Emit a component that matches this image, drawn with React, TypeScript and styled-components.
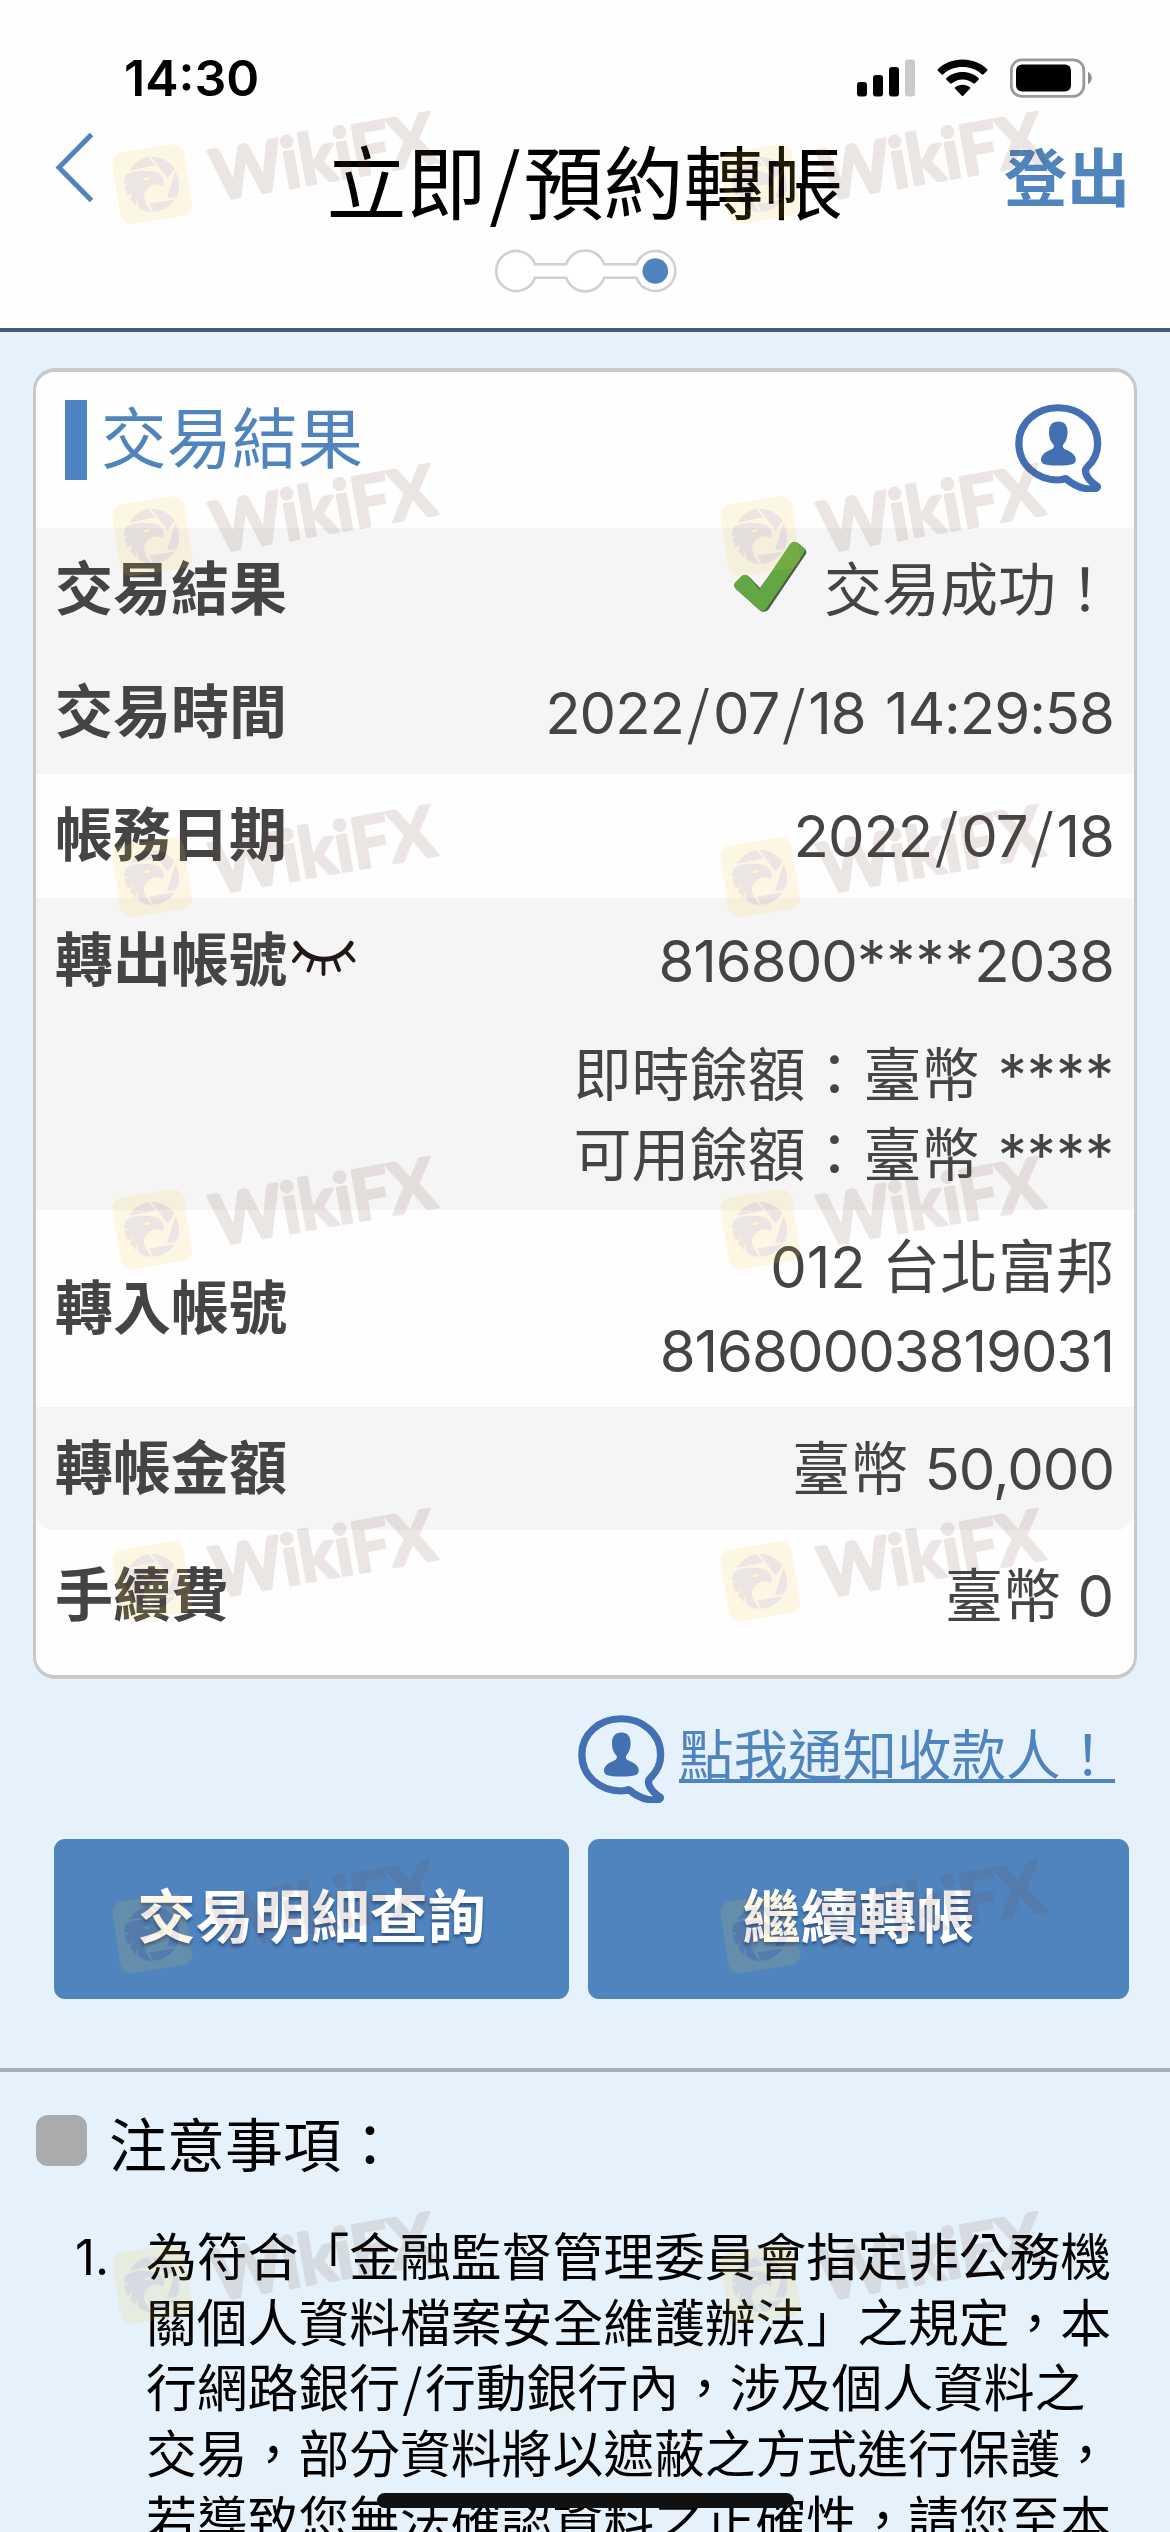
import React from 'react';
import styled, { createGlobalStyle } from 'styled-components';

const GlobalStyle = createGlobalStyle`
  body { margin: 0; background: #e5f2fc; }
  * { box-sizing: border-box; }
`;

const blue = '#4f84be';
const fonts = `Inter, "Noto Sans CJK TC", sans-serif`;

const Page = styled.div`
  position: relative;
  width: 1170px;
  height: 2532px;
  overflow: hidden;
  background: #e5f2fc;
  font-family: ${fonts};
  color: #000;
`;

const Header = styled.header`
  height: 332px;
  background: #fefefe;
  border-bottom: 4px solid #445c78;
`;

const StatusBar = styled.div`
  display: flex;
  align-items: center;
  justify-content: space-between;
  height: 120px;
  padding: 36px 78px 0 124px;
`;

const Time = styled.span`
  font-size: 50px;
  font-weight: 600;
  line-height: 60px;
`;

const StatusIcons = styled.div`
  display: flex;
  align-items: center;
  gap: 22px;
`;

const NavBar = styled.div`
  display: grid;
  grid-template-columns: 200px 1fr 200px;
  align-items: center;
  height: 128px;
  padding: 0 40px 0 54px;
`;

const BackButton = styled.a`
  display: flex;
  padding-bottom: 32px;
`;

const Title = styled.h1`
  margin: 0 0 0 -14px;
  font-size: 80px;
  font-weight: 400;
  line-height: 128px;
  text-align: center;
  white-space: nowrap;
`;

const Slash = styled.span<{ $width: number }>`
  display: inline-block;
  width: ${p => p.$width}px;
  font-family: "Noto Sans CJK TC", sans-serif;
  letter-spacing: 0;
  line-height: 1;
  text-align: center;
`;

const Logout = styled.a`
  color: ${blue};
  font-size: 63px;
  font-weight: 700;
  line-height: 96px;
  padding-bottom: 12px;
  text-align: right;
`;

const Steps = styled.div`
  display: flex;
  justify-content: center;
  padding: 1px 0 0 1px;
`;

const Card = styled.section`
  margin: 36px 33px 0;
  height: 1311px;
  border: 4px solid #c9c9c9;
  border-left-width: 3px;
  border-right-width: 3px;
  border-radius: 22px;
  background: #fefefe;
  overflow: hidden;
`;

const CardHead = styled.div`
  display: flex;
  justify-content: space-between;
  align-items: flex-start;
  height: 156px;
  padding: 28px 31px 0 29px;
`;

const Heading = styled.h2`
  display: flex;
  align-items: center;
  margin: 0;
  height: 80px;
  padding: 0 0 0 14px;
  border-left: 22px solid #4f84c4;
  color: ${blue};
  font-size: 65.5px;
  font-weight: 400;
  line-height: 70px;
`;

const NotifyButton = styled.a`
  display: flex;
  margin-top: 4px;
`;

const Row = styled.div<{ $shade?: boolean; $round?: boolean; $height?: number; $top?: number }>`
  display: flex;
  flex-wrap: wrap;
  justify-content: space-between;
  align-items: center;
  min-height: ${p => p.$height ?? 123}px;
  padding: ${p => p.$top ?? 0}px 20px 0 19px;
  background: ${p => (p.$shade ? '#f5f5f5' : 'transparent')};
  border-radius: ${p => (p.$round ? '0 0 18px 18px' : '0')};
`;

const Label = styled.div`
  display: flex;
  align-items: center;
  padding-bottom: 2px;
  color: #444;
  font-size: 58px;
  font-weight: 700;
  line-height: 120px;
`;

const Value = styled.div`
  display: flex;
  align-items: center;
  color: #444;
  font-size: 58px;
  font-weight: 400;
  line-height: 84px;
  text-align: right;
`;

const Digits = styled.span`
  letter-spacing: -1px;
  word-spacing: 4px;
  white-space: pre;
`;

const Mask = styled.span`
  letter-spacing: 0.3px;
`;

const Balances = styled.div`
  width: 100%;
  padding: 13px 0 15px;
  color: #444;
  font-size: 58px;
  line-height: 80px;
  word-spacing: 2px;
  text-align: right;
`;

const EyeSlot = styled.span`
  display: flex;
  margin: -4px 0 0 5px;
`;

const CheckSlot = styled.span`
  display: flex;
  margin: -26px 16px 0 0;
`;

const NotifyRow = styled.div`
  display: flex;
  justify-content: flex-end;
  align-items: center;
  height: 88px;
  margin-top: 36px;
  padding-right: 55px;
  gap: 13px;
`;

const NotifyLink = styled.a`
  color: ${blue};
  font-size: 54.5px;
  line-height: 80px;
  padding-bottom: 9px;
  text-decoration: underline;
  text-decoration-thickness: 4px;
  text-underline-offset: 4px;
  text-decoration-skip-ink: none;
`;

const Actions = styled.div`
  display: grid;
  grid-template-columns: 515px 541px;
  gap: 19px;
  margin-top: 36px;
  padding-left: 54px;
`;

const ActionButton = styled.button`
  height: 160px;
  padding: 0 0 12px;
  border: 0;
  border-radius: 11px;
  background: ${blue};
  color: #fff;
  font-family: ${fonts};
  font-size: 58px;
  font-weight: 600;
  text-shadow: 0 3px 3px rgba(20, 50, 100, 0.55);
`;

const Notes = styled.section`
  margin-top: 69px;
  border-top: 4px solid #abafb2;
  padding: 44px 0 0 36px;
`;

const NotesTitle = styled.h3`
  display: flex;
  align-items: center;
  gap: 22px;
  margin: 0;
  font-size: 58px;
  font-weight: 400;
  line-height: 60px;
`;

const NotesMark = styled.span`
  width: 51px;
  height: 51px;
  margin-top: -11px;
  border-radius: 12px;
  background: #aaabad;
`;

const NoteItem = styled.div`
  display: grid;
  grid-template-columns: 71px auto;
  margin-top: 49px;
  padding-left: 39px;
  font-size: 50.8px;
  line-height: 65.7px;
`;

const NoteNumber = styled.span`
  font-size: 49px;
`;

const NoteLine = styled.div`
  height: 65.7px;
  white-space: nowrap;
`;

const HomeIndicator = styled.div`
  position: absolute;
  left: 377px;
  bottom: 24px;
  width: 417px;
  height: 15px;
  border-radius: 8px;
  background: #111;
`;

const WatermarkLayer = styled.div`
  position: absolute;
  inset: 0;
  display: grid;
  grid-template-columns: 608px 400px;
  grid-template-rows: 352px 341px 352px 352px 352px 351px 200px;
  padding: 105px 0 0 105px;
  overflow: hidden;
  pointer-events: none;
`;

const PersonBubble = () => (
  <svg width="88" height="88" viewBox="0 0 88 88">
    <path
      d="M43.5 4 C65 4 83.5 19.5 83.5 41.5 C83.5 51 80 59 73 66 C68 71 74 80 83 86 Q84 88 80 89 C69 90 60 86 51 78 C48 79.500 46 79.500 43.500 79.500 C21 79.500 3.500 63 3.500 41.500 C3.500 20 21 4 43.500 4 Z"
      transform="translate(0.4 0) scale(0.985 0.955)"
      fill="none"
      stroke="#4270b3"
      strokeWidth="7.4"
      strokeLinejoin="round"
    />
    <path
      d="M43.300 17.500 C49.500 17.500 52.600 21.500 52.600 28 C52.600 34 50.500 38 48 41 Q47.300 44 50 45.200 C56 47.500 60.800 51 60.800 55.500 C60.800 60 57 61.500 43.300 61.500 C29.500 61.500 26 60 26 55.500 C26 51 30.800 47.500 36.700 45.200 Q39.500 44 38.700 41 C36 38 34 34 34 28 C34 21.500 37.300 17.500 43.300 17.500 Z"
      fill="#4270b3"
    />
  </svg>
);

const SignalIcon = () => (
  <svg width="58" height="38" viewBox="0 0 58 38">
    <rect x="0" y="23" width="10" height="14.500" rx="3" />
    <rect x="16" y="16" width="10" height="21.500" rx="3" />
    <rect x="32" y="8" width="10" height="29.500" rx="3" />
    <rect x="48" y="0.500" width="10" height="37" rx="3" fill="#cbcbcb" />
  </svg>
);

const WifiIcon = () => (
  <svg width="51" height="38" viewBox="0 0 51 38">
    <path d="M25.500 0.500 C35 0.500 44 4 50.200 10.200 Q50.800 11 50.200 11.700 L46.500 15.300 Q45.700 16 44.800 15.200 C39.500 10.500 32.800 8 25.500 8 C18.200 8 11.500 10.500 6.200 15.200 Q5.300 16 4.500 15.300 L0.800 11.700 Q0.200 11 0.800 10.200 C7 4 16 0.500 25.500 0.500 Z" />
    <path d="M25.500 13 C32 13 37.500 15.300 41.600 19.200 Q42.300 20 41.600 20.700 L37.900 24.300 Q37.100 25 36.200 24.200 C33.200 21.700 29.500 20.400 25.500 20.400 C21.500 20.400 17.800 21.700 14.800 24.200 Q13.900 25 13.100 24.300 L9.400 20.700 Q8.700 20 9.400 19.200 C13.500 15.300 19 13 25.500 13 Z" />
    <path d="M25.500 25.700 C28.500 25.700 31 26.600 32.900 28.200 Q33.700 29 32.900 29.800 L26.200 36.800 Q25.500 37.500 24.800 36.800 L18.100 29.800 Q17.300 29 18.100 28.200 C20 26.600 22.500 25.700 25.500 25.700 Z" />
  </svg>
);

const BatteryIcon = () => (
  <svg width="82" height="40" viewBox="0 0 82 40">
    <rect x="1.300" y="1.800" width="72.500" height="36.500" rx="10.500" fill="none" stroke="#9a9a9a" strokeWidth="2.800" />
    <rect x="6" y="6.500" width="55" height="27" rx="6" />
    <path d="M78 13.800 C83 16.500 83 23.500 78 26.200 Z" fill="#8d8d8d" />
  </svg>
);

const BackIcon = () => (
  <svg width="40" height="70" viewBox="0 0 40 70" fill="none" stroke={blue} strokeWidth="5">
    <path d="M37.500 1.500 L5 34.500 L37.500 67.500" />
  </svg>
);

const StepsIcon = () => (
  <svg width="182" height="44" viewBox="0 0 182 44">
    <path
      d="M40 15.300 H71.200 A20 20 0 0 1 109.200 15.300 H141.500 A20 20 0 1 1 141.500 28.700 H109.200 A20 20 0 0 1 71.200 28.700 H40 A20 20 0 1 1 40 15.300 Z"
      fill="#fff"
      stroke="#d0d0d2"
      strokeWidth="2.600"
    />
    <circle cx="160.300" cy="22" r="12.800" fill={blue} />
  </svg>
);

const CheckIcon = () => (
  <svg width="75" height="72" viewBox="0 0 75 72">
    <path d="M3 48 Q1.500 45 4 42.500 L10 36.500 Q13.500 34 17 36.500 L27 47 L58.500 4 Q61.500 0.500 65.500 2.500 L72 8 Q74.500 10.500 72.500 13.500 L35.500 68.500 Q31.500 72.500 27 69.500 Z" fill="#4b5a45" />
    <path d="M1.500 46.500 Q0 43.500 2.500 41 L8.500 35 Q12 32.500 15.500 35 L26.500 48.500 L57 3 Q60 -0.500 64 1.500 L70.500 6.500 Q73 9 71 12 L33.500 67.500 Q30 71.500 26 68.500 Z" fill="#62a744" />
  </svg>
);

const ClosedEyeIcon = () => (
  <svg width="64" height="38" viewBox="0 0 64 38" fill="none" stroke="#231815" strokeLinecap="round">
    <path d="M4 4.500 C18 25.500 46 25.500 59 4.500" strokeWidth="5" />
    <path d="M8.500 14 L2 22 M20.500 21 L16.500 31.500 M31.500 22 V35 M43 21 L47 31 M54.500 13.500 L61.500 21.500" strokeWidth="3.800" />
  </svg>
);

const Watermark = () => (
  <svg width="350" height="140" viewBox="0 0 350 140">
    <g opacity="0.13">
      <rect x="11" y="43" width="72.500" height="72.500" rx="11" fill="#f5c838" transform="rotate(-9 47.300 79.300)" />
      <g transform="translate(0 20) scale(0.33333)" fill="#734536">
        <path d="M72 137 Q95 103 130 97 L152 121 Z" />
        <path d="M138 96 A83 83 0 0 1 209 131 L188 160 Z" />
        <path d="M211 139 A83 83 0 0 1 214 217 L186 219 Z" />
        <path d="M210 223 Q185 259 145 260 L133 236 Z" />
        <path d="M63 149 Q90 135 122 138 C140 137 160 142 164 149 C174 156 179 168 176 178 L169 188 Q169 178 158 178 C137 177 117 194 117 216 Q118 238 141 261 Q116 260 101 246 L96 216 L93 240 Q82 232 76 222 L82 200 L70 213 Q61 200 59 184 L76 172 L58 178 Q57 163 63 149 Z" />
        <path d="M114 159 Q126 160 137 155 Q134 167 122 165 Z" fill="#f5c838" />
      </g>
      <text
        x="0"
        y="0"
        transform="translate(111 96) rotate(-10)"
        textLength="226"
        lengthAdjust="spacingAndGlyphs"
        fontFamily="Lato, sans-serif"
        fontSize="70"
        fontWeight="700"
        fill="#734536"
        stroke="#734536"
        strokeWidth="3"
        strokeLinejoin="round"
      >
        WikiFX
      </text>
    </g>
  </svg>
);

const watermarkSlots = Array.from({ length: 14 }, (_, i) => i);

export default function App() {
  return (
    <Page>
      <GlobalStyle />
      <Header>
        <StatusBar>
          <Time>14:30</Time>
          <StatusIcons>
            <SignalIcon />
            <WifiIcon />
            <BatteryIcon />
          </StatusIcons>
        </StatusBar>
        <NavBar>
          <BackButton><BackIcon /></BackButton>
          <Title>立即<Slash $width={37}>/</Slash>預約轉帳</Title>
          <Logout>登出</Logout>
        </NavBar>
        <Steps><StepsIcon /></Steps>
      </Header>

      <Card>
        <CardHead>
          <Heading>交易結果</Heading>
          <NotifyButton><PersonBubble /></NotifyButton>
        </CardHead>
        <Row $shade>
          <Label>交易結果</Label>
          <Value><CheckSlot><CheckIcon /></CheckSlot>交易成功！</Value>
        </Row>
        <Row $shade>
          <Label>交易時間</Label>
          <Value>
            <Digits>2022<Slash $width={29}>/</Slash>07<Slash $width={29}>/</Slash>18 14:29:58</Digits>
          </Value>
        </Row>
        <Row $height={124}>
          <Label>帳務日期</Label>
          <Value>
            <Digits>2022<Slash $width={29}>/</Slash>07<Slash $width={29}>/</Slash>18</Digits>
          </Value>
        </Row>
        <Row $shade $height={312} $top={2}>
          <Label>轉出帳號<EyeSlot><ClosedEyeIcon /></EyeSlot></Label>
          <Value><Digits>816800<Mask>****</Mask>2038</Digits></Value>
          <Balances>
            <div>即時餘額：臺幣 ****</div>
            <div>可用餘額：臺幣 ****</div>
          </Balances>
        </Row>
        <Row $height={197}>
          <Label>轉入帳號</Label>
          <Value>
            <div>
              <div>012 台北富邦</div>
              <div><Digits>81680003819031</Digits></div>
            </div>
          </Value>
        </Row>
        <Row $shade $round>
          <Label>轉帳金額</Label>
          <Value><span>臺幣 <Digits>50,000</Digits></span></Value>
        </Row>
        <Row $height={129} $top={2}>
          <Label>手續費</Label>
          <Value>臺幣 0</Value>
        </Row>
      </Card>

      <NotifyRow>
        <PersonBubble />
        <NotifyLink>點我通知收款人！</NotifyLink>
      </NotifyRow>

      <Actions>
        <ActionButton>交易明細查詢</ActionButton>
        <ActionButton>繼續轉帳</ActionButton>
      </Actions>

      <Notes>
        <NotesTitle><NotesMark />注意事項：</NotesTitle>
        <NoteItem>
          <NoteNumber>1.</NoteNumber>
          <div>
            <NoteLine>為符合「金融監督管理委員會指定非公務機</NoteLine>
            <NoteLine>關個人資料檔案安全維護辦法」之規定，本</NoteLine>
            <NoteLine>行網路銀行<Slash $width={25}>/</Slash>行動銀行內，涉及個人資料之</NoteLine>
            <NoteLine>交易，部分資料將以遮蔽之方式進行保護，</NoteLine>
            <NoteLine>若導致您無法確認資料之正確性，請您至本</NoteLine>
          </div>
        </NoteItem>
      </Notes>

      <HomeIndicator />
      <WatermarkLayer>
        {watermarkSlots.map(i => <Watermark key={i} />)}
      </WatermarkLayer>
    </Page>
  );
}
